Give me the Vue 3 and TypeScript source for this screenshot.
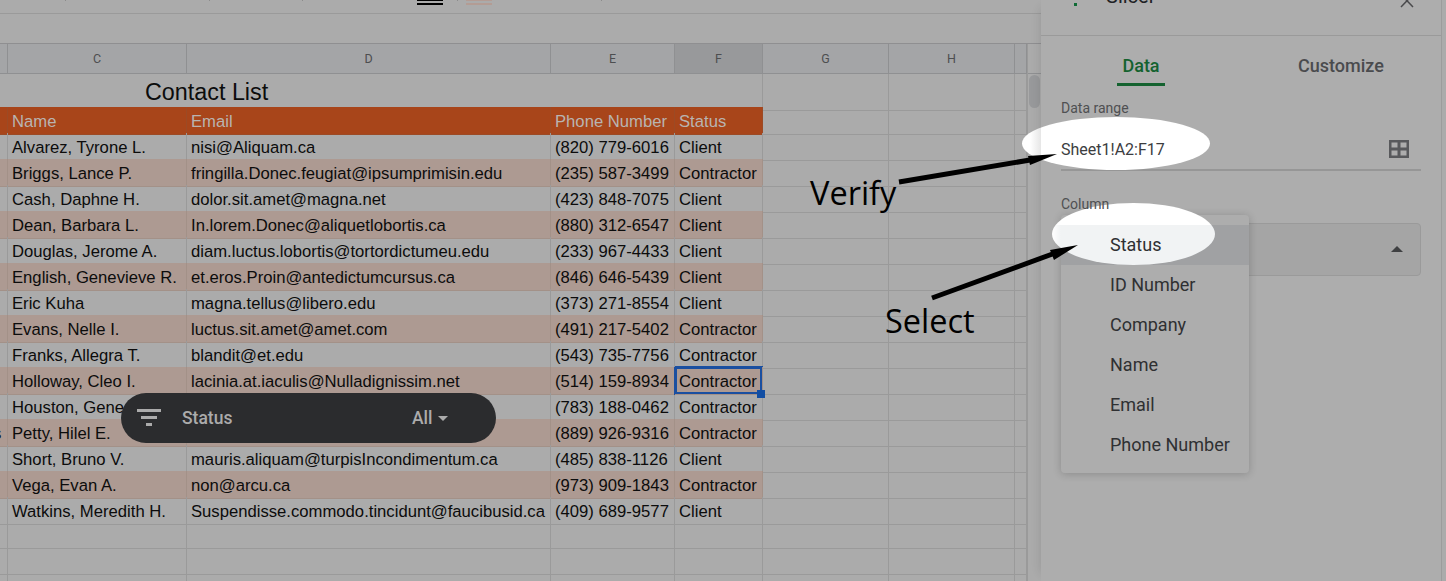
<script setup lang="ts">
interface Row { name: string; email: string; phone: string; status: string; tail?: string }

const columns = ['', 'C', 'D', 'E', 'F', 'G', 'H', '']
const rows: Row[] = [
  { name: 'Alvarez, Tyrone L.', email: 'nisi@Aliquam.ca', phone: '(820) 779-6016', status: 'Client' },
  { name: 'Briggs, Lance P.', email: 'fringilla.Donec.feugiat@ipsumprimisin.edu', phone: '(235) 587-3499', status: 'Contractor' },
  { name: 'Cash, Daphne H.', email: 'dolor.sit.amet@magna.net', phone: '(423) 848-7075', status: 'Client' },
  { name: 'Dean, Barbara L.', email: 'In.lorem.Donec@aliquetlobortis.ca', phone: '(880) 312-6547', status: 'Client' },
  { name: 'Douglas, Jerome A.', email: 'diam.luctus.lobortis@tortordictumeu.edu', phone: '(233) 967-4433', status: 'Client' },
  { name: 'English, Genevieve R.', email: 'et.eros.Proin@antedictumcursus.ca', phone: '(846) 646-5439', status: 'Client' },
  { name: 'Eric Kuha', email: 'magna.tellus@libero.edu', phone: '(373) 271-8554', status: 'Client' },
  { name: 'Evans, Nelle I.', email: 'luctus.sit.amet@amet.com', phone: '(491) 217-5402', status: 'Contractor' },
  { name: 'Franks, Allegra T.', email: 'blandit@et.edu', phone: '(543) 735-7756', status: 'Contractor' },
  { name: 'Holloway, Cleo I.', email: 'lacinia.at.iaculis@Nulladignissim.net', phone: '(514) 159-8934', status: 'Contractor' },
  { name: 'Houston, Gene', email: '', phone: '(783) 188-0462', status: 'Contractor' },
  { name: 'Petty, Hilel E.', email: '', phone: '(889) 926-9316', status: 'Contractor', tail: 's' },
  { name: 'Short, Bruno V.', email: 'mauris.aliquam@turpisIncondimentum.ca', phone: '(485) 838-1126', status: 'Client' },
  { name: 'Vega, Evan A.', email: 'non@arcu.ca', phone: '(973) 909-1843', status: 'Contractor' },
  { name: 'Watkins, Meredith H.', email: 'Suspendisse.commodo.tincidunt@faucibusid.ca', phone: '(409) 689-9577', status: 'Client' },
]
const options = ['Status', 'ID Number', 'Company', 'Name', 'Email', 'Phone Number']
const ticks = [65, 143, 92, 154, 143]
</script>

<template>
  <div class="page">
    <section class="sheet">
      <div class="toolbar">
        <i v-for="(gap, n) in ticks" :key="n" class="tick" :style="{ marginLeft: gap + 'px' }"></i>
      </div>
      <div class="formula"></div>
      <div class="grid-wrap">
        <div class="grid">
          <div class="row col-head">
            <div v-for="(c, n) in columns" :key="n" class="cell" :class="{ active: c === 'F' }">{{ c }}</div>
          </div>
          <div class="row title-row">
            <div class="title-cell">Contact List</div>
            <div class="cell"></div>
            <div class="cell"></div>
            <div class="cell"></div>
          </div>
          <div class="row head-row">
            <div class="cell orange"></div>
            <div class="cell orange">Name</div>
            <div class="cell orange">Email</div>
            <div class="cell orange">Phone Number</div>
            <div class="cell orange">Status</div>
            <div class="cell"></div>
            <div class="cell"></div>
            <div class="cell"></div>
          </div>
          <div v-for="(r, n) in rows" :key="r.name" class="row body-row" :class="{ alt: n % 2 === 1 }">
            <div class="cell tinted tail">{{ r.tail }}</div>
            <div class="cell tinted">{{ r.name }}</div>
            <div class="cell tinted">{{ r.email }}</div>
            <div class="cell tinted">{{ r.phone }}</div>
            <div class="cell tinted" :class="{ selected: n === 9 }">
              {{ r.status }}
              <i v-if="n === 9" class="handle"></i>
            </div>
            <div class="cell"></div>
            <div class="cell"></div>
            <div class="cell"></div>
          </div>
          <div v-for="n in 3" :key="'e' + n" class="row body-row">
            <div v-for="m in 8" :key="m" class="cell"></div>
          </div>
        </div>
        <div class="scrollbar">
          <div class="scroll-corner"></div>
          <div class="scroll-thumb"></div>
        </div>
      </div>

      <div class="chip">
        <svg class="chip-filter" width="24" height="18" viewBox="0 0 24 18">
          <path d="M0 0h24v3H0zM4 7h16v3H4zM9 14h6v3H9z" fill="#ababab" />
        </svg>
        <span class="chip-label">Status</span>
        <span class="chip-value">All</span>
        <i class="chip-caret"></i>
      </div>
    </section>

    <aside class="panel">
      <header class="panel-head">
        <i class="sheet-dot"></i>
        <span class="panel-title">Slicer</span>
        <svg class="close" width="16" height="10" viewBox="0 0 16 10">
          <path d="M1.5 -6L14 7M14.500 -6L2 7" stroke="#4a4a4c" stroke-width="1.500" fill="none" />
        </svg>
      </header>
      <nav class="tabs">
        <span class="tab on">Data</span>
        <span class="tab">Customize</span>
      </nav>
      <div class="panel-body">
        <div class="label">Data range</div>
        <div class="range">
          <span class="range-value">Sheet1!A2:F17</span>
          <svg width="20" height="18" viewBox="0 0 20 18">
            <path fill-rule="evenodd" d="M0 0h20v18H0zM2.500 2.500v5h6v-5zM11.500 2.500v5h6v-5zM2.500 10.500v5h6v-5zM11.500 10.500v5h6v-5z" fill="#58595c" />
          </svg>
        </div>
        <div class="label col-label">Column</div>
        <div class="select"><i class="select-caret"></i></div>
      </div>
      <div class="menu">
        <div class="menu-hl"></div>
        <div v-for="o in options" :key="o" class="menu-item">{{ o }}</div>
      </div>
    </aside>

    <div class="halo halo-range"></div>
    <div class="halo halo-column"></div>

    <svg class="arrows" width="1446" height="581" viewBox="0 0 1446 581">
      <path d="M899 182L1036 159" stroke="#000" stroke-width="5" fill="none" />
      <path d="M1057 154L1028 156L1030 165z" fill="#000" />
      <path d="M932 298L1058 252" stroke="#000" stroke-width="5" fill="none" />
      <path d="M1078 245L1050 250L1054 260z" fill="#000" />
    </svg>
    <div class="note note-verify">Verify</div>
    <div class="note note-select">Select</div>
  </div>
</template>

<style>
html, body { margin: 0; background: #ababab; }
</style>

<style scoped>
.page {
  position: relative;
  display: flex;
  width: 1446px;
  height: 581px;
  overflow: hidden;
  background: #ababab;
  font-family: "Liberation Sans", Arial, sans-serif;
}

/* sheet */
.sheet { position: relative; width: 1041px; flex: none; }
.toolbar {
  position: relative;
  display: flex;
  height: 13px;
  border-bottom: 1px solid #9a9a9a;
}
.toolbar::before, .toolbar::after {
  content: "";
  position: absolute;
  top: 0;
  width: 26px;
  height: 5px;
}
.toolbar::before {
  left: 417px;
  background: linear-gradient(180deg, #000 1px, transparent 1px, transparent 3px, #000 3px);
}
.toolbar::after {
  left: 466px;
  background: linear-gradient(180deg, #b39c94 1px, transparent 1px, transparent 3px, #b39c94 3px);
}
.tick { display: block; width: 1px; height: 1px; background: #8c8c8c; }
.formula { height: 29px; border-bottom: 1px solid #8f8f91; }
.grid-wrap { display: flex; height: 537px; }
.grid { width: 1027px; flex: none; overflow: hidden; }
.row {
  display: grid;
  grid-template-columns: 8px 179px 364px 124px 88px 126px 126px 12px;
  height: 26px;
}
.cell {
  position: relative;
  box-sizing: border-box;
  min-width: 0;
  padding: 2px 0 0 4px;
  border-right: 1px solid #9a9a9a;
  border-bottom: 1px solid #9a9a9a;
  font-size: 16.67px;
  line-height: 25px;
  color: #0c0c0c;
  white-space: nowrap;
}
.col-head { height: 30px; }
.col-head .cell {
  padding: 0;
  background: #a4a5a7;
  border-color: #8f9092;
  font-family: Roboto, sans-serif;
  font-size: 12.500px;
  line-height: 29px;
  text-align: center;
  color: #4d4e50;
}
.col-head .cell.active { background: #98999b; }
.title-row {
  height: 33px;
  grid-template-columns: 763px 126px 126px 12px;
}
.title-row .cell { padding: 0; }
.title-cell {
  box-sizing: border-box;
  padding-left: 145px;
  border-right: 1px solid #9a9a9a;
  border-bottom: 1px solid #9a9a9a;
  font-size: 23.33px;
  line-height: 36px;
  color: #0c0c0c;
}
.cell.orange {
  background: #a8451a;
  border-color: #9c4a25;
  color: #b9b4b1;
}
.body-row .tail {
  padding: 2px 0 0;
  text-indent: -7px;
  overflow: hidden;
}
.alt .tinted { background: #ad9a92; border-color: #a39188; }
.selected {
  box-shadow: inset 0 0 0 2px #1a4fa0, -1px 0 0 0 #1a4fa0, 0 -1px 0 0 #1a4fa0;
  z-index: 1;
}
.handle {
  position: absolute;
  right: -3px;
  bottom: -4px;
  width: 8px;
  height: 8px;
  background: #124ea3;
}
.scrollbar { position: relative; flex: 1; border-left: 1px solid #9a9a9a; }
.scroll-corner { height: 29px; border-bottom: 1px solid #8f9092; }
.scroll-thumb {
  position: absolute;
  top: 31px;
  left: 1px;
  width: 11px;
  height: 33px;
  border-radius: 6px;
  background: #98999b;
}

/* floating slicer */
.chip {
  position: absolute;
  left: 121px;
  top: 393px;
  z-index: 1;
  display: flex;
  align-items: center;
  box-sizing: border-box;
  width: 375px;
  height: 50px;
  padding-left: 16px;
  border-radius: 25px;
  background: #2b2c2e;
  color: #ababab;
  font-family: Roboto, sans-serif;
  font-size: 17.500px;
  font-weight: 500;
}
.chip-filter { flex: none; }
.chip-label { margin-left: 21px; width: 230px; }
.chip-caret {
  margin-left: 5px;
  border: 5px solid transparent;
  border-top-color: #ababab;
  border-bottom: 0;
}

/* side panel */
.panel {
  position: relative;
  box-sizing: border-box;
  width: 401px;
  flex: none;
  border-right: 1px solid #9c9c9c;
  background: #adadad;
  box-shadow: -8px 0 10px -8px rgba(0, 0, 0, .12);
  font-family: Roboto, sans-serif;
}
.panel-head {
  position: relative;
  box-sizing: border-box;
  display: flex;
  align-items: flex-start;
  height: 36px;
  border-bottom: 1px solid #9a9a9a;
}
.sheet-dot {
  width: 3px;
  height: 3px;
  margin: 3px 0 0 33px;
  background: #0f6b35;
}
.panel-title {
  margin: -17px 0 0 29px;
  font-size: 20px;
  line-height: 26px;
  color: #202124;
}
.close { position: absolute; left: 358px; top: 0; }
.tabs {
  display: grid;
  grid-template-columns: 200px 200px;
  height: 49px;
}
.tab {
  position: relative;
  padding-top: 20px;
  text-align: center;
  font-size: 18px;
  font-weight: 500;
  line-height: 20px;
  color: #4a4b4e;
}
.tab.on { color: #14622f; }
.tab.on::after {
  content: "";
  position: absolute;
  left: 76px;
  top: 47px;
  width: 48px;
  height: 3px;
  background: #14622f;
}
.panel-body { padding: 15px 20px 0; }
.label {
  position: relative;
  z-index: 2;
  font-size: 14px;
  line-height: 17px;
  color: #4f5052;
}
.range {
  display: flex;
  align-items: center;
  justify-content: space-between;
  height: 41px;
  margin-top: 11px;
  padding: 0 12px 0 0;
  border-bottom: 2px solid #969696;
}
.range svg { position: relative; z-index: 2; }
.range-value {
  position: relative;
  z-index: 2;
  font-size: 16px;
  color: #3c3d3f;
  margin-top: 1px;
}
.col-label { margin-top: 25px; }
.select {
  position: relative;
  box-sizing: border-box;
  height: 53px;
  margin-top: 10px;
  border: 1px solid #9a9a9a;
  border-radius: 4px;
  background: #a5a5a5;
}
.select-caret {
  position: absolute;
  right: 17px;
  top: 22px;
  border: 6px solid transparent;
  border-top: 0;
  border-bottom-color: #3f4042;
}
.menu {
  position: absolute;
  left: 20px;
  top: 215px;
  box-sizing: border-box;
  width: 188px;
  height: 258px;
  padding-top: 10px;
  border-radius: 4px;
  background: #adadad;
  box-shadow: 0 1px 8px rgba(0, 0, 0, .2);
}
.menu-hl {
  position: absolute;
  left: 0;
  right: 0;
  top: 10px;
  height: 40px;
  background: #a0a1a3;
  z-index: 0;
}
.menu-item {
  position: relative;
  z-index: 2;
  height: 40px;
  padding-left: 49px;
  font-size: 18px;
  line-height: 40px;
  color: #2f3032;
  white-space: nowrap;
}

/* annotations */
.halo { position: absolute; z-index: 1; border-radius: 50%; }
.halo-range {
  left: 1022px;
  top: 117px;
  width: 188px;
  height: 53px;
  background: linear-gradient(90deg, #fff 8px, #e6e6e6 19px, #fff 19px);
}
.halo-column {
  left: 1052px;
  top: 203px;
  width: 163px;
  height: 62px;
  background:
    linear-gradient(90deg, #fff 0, rgba(255, 255, 255, 0) 9px),
    linear-gradient(180deg, #fff 22px, #f1f3f4 22px);
}
.arrows { position: absolute; left: 0; top: 0; z-index: 3; pointer-events: none; }
.note {
  position: absolute;
  z-index: 3;
  font-family: "Open Sans", sans-serif;
  font-size: 32.500px;
  line-height: 40px;
  color: #000;
}
.note-verify { left: 810px; top: 173px; }
.note-select { left: 885px; top: 301px; }
</style>
